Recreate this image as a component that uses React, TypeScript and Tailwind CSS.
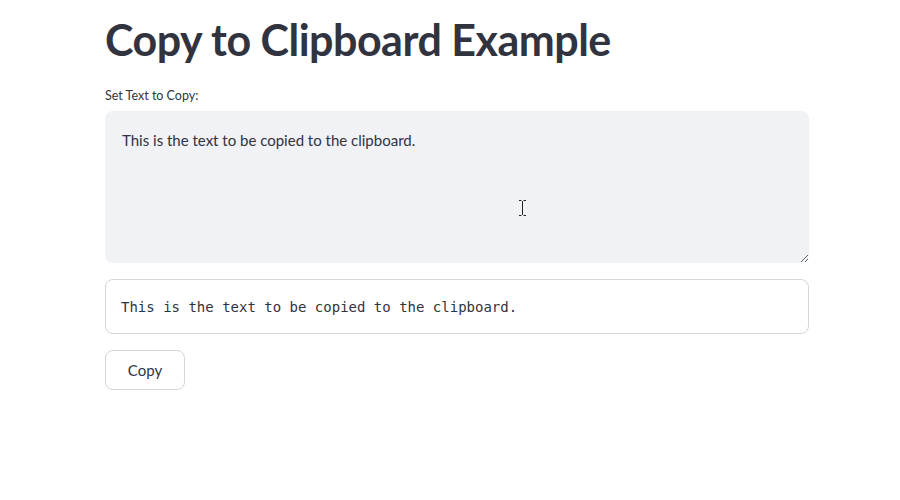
import { useState } from 'react'

const sans = '"Source Sans Pro", Lato, "Noto Sans", sans-serif'
const mono = '"DejaVu Sans Mono", "Liberation Mono", monospace'

function IBeam() {
  return (
    <svg
      className="pointer-events-none absolute left-[413px] top-[88px]"
      width="9"
      height="18"
      viewBox="0 0 9 18"
      fill="none"
      stroke="#222"
      strokeWidth="1"
    >
      <path d="M1 1.5h2.5M5.5 1.5H8M4.5 2v14M1 16.5h2.5M5.5 16.5H8" />
    </svg>
  )
}

export default function App() {
  const [text, setText] = useState('This is the text to be copied to the clipboard.')

  return (
    <div className="min-h-[500px] w-full bg-white text-[#31333F]" style={{ fontFamily: sans }}>
      <div className="ml-[105px] flex w-[704px] flex-col pt-[11px]">
        <h1 className="text-[43px] font-bold leading-[58px] tracking-[-0.5px]">Copy to Clipboard Example</h1>

        <label className="mt-[18px] text-[12.5px] leading-[18px]">Set Text to Copy:</label>
        <div className="relative mt-[6px]">
          <textarea
            value={text}
            onChange={(e) => setText(e.target.value)}
            className="block h-[152px] w-full resize-y rounded-lg bg-[#f0f2f6] px-[17px] py-[16px] text-[15px] leading-[26px] text-[#31333F] outline-none"
            style={{ fontFamily: sans }}
          />
          <IBeam />
        </div>

        <div className="mt-[16px] flex h-[55px] items-center rounded-lg border border-[#d6d6d9] px-[15px] pt-[1px]">
          <code className="text-[14px] text-[#31333F]" style={{ fontFamily: mono }}>
            {text}
          </code>
        </div>

        <div className="mt-[16px]">
          <button className="h-[40px] w-[80px] rounded-lg border border-[#d6d6d9] bg-white text-[15px] text-[#31333F]">
            Copy
          </button>
        </div>
      </div>
    </div>
  )
}
